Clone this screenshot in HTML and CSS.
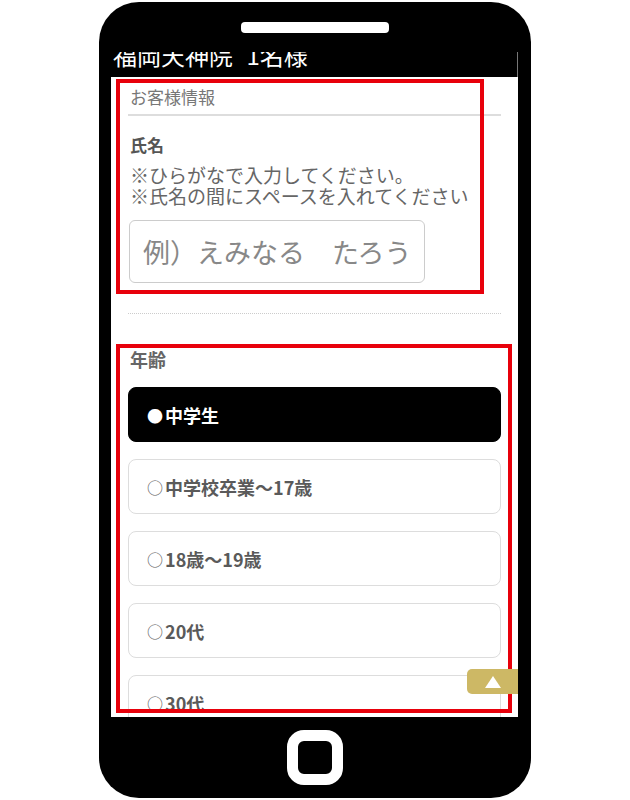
FILE: index.html
```html
<!DOCTYPE html>
<html lang="ja">
    <head>
        <meta charset="UTF-8">
        <meta name="viewport" content="width=device-width, initial-scale=1.0">
        <title>お客様情報</title>
        <link rel="stylesheet" href="styles.css">
    </head>
    <body>
        <div class="phone">
            <div class="speaker"></div>
            <div class="screen">
                <div class="site-header">
                    <div class="site-title">福岡天神院 <span class="site-count">1名様</span></div>
                </div>
                <div class="form-body">
                    <h3 class="form-heading">お客様情報</h3>
                    <div class="field">
                        <div class="field-label">氏名</div>
                        <p class="field-note">※ひらがなで入力してください。<br>※氏名の間にスペースを入れてください</p>
                        <input class="text-input" type="text" placeholder="例）えみなる　たろう">
                    </div>
                    <hr class="divider">
                    <div class="field">
                        <div class="field-label age-label">年齢</div>
                        <div class="options">
                            <div class="option selected"><span class="option-mark">●</span>中学生</div>
                            <div class="option"><span class="option-mark">○</span>中学校卒業〜17歳</div>
                            <div class="option"><span class="option-mark">○</span>18歳〜19歳</div>
                            <div class="option"><span class="option-mark">○</span>20代</div>
                            <div class="option"><span class="option-mark">○</span>30代</div>
                        </div>
                    </div>
                </div>
                <!-- annotation boxes -->
                <div class="mark mark-name"></div>
                <div class="mark mark-age"></div>
                <div class="to-top"><span class="to-top-arrow"></span></div>
            </div>
            <div class="home-button"></div>
        </div>
    </body>
</html>
```

FILE: styles.css
```css
body {
    margin: 0;
    background-color: #fff;
    font-family: "Noto Sans CJK JP", "Noto Sans", sans-serif;
}
.phone {
    width: 432px;
    height: 796px;
    margin: 2px auto 0;
    padding: 20px 0 13px;
    box-sizing: border-box;
    background-color: #000;
    border-radius: 40px;
    display: flex;
    flex-direction: column;
    align-items: center;
}
.speaker {
    width: 148px;
    height: 11px;
    background-color: #fff;
    border-radius: 4px;
    flex-shrink: 0;
}
.screen {
    position: relative;
    align-self: stretch;
    height: 665px;
    margin: 19px 13px 0 12px;
    background-color: #fff;
    overflow: hidden;
    flex-shrink: 0;
}
.home-button {
    width: 56px;
    height: 55px;
    margin-top: 13px;
    box-sizing: border-box;
    border: 11px solid #fff;
    border-radius: 17px;
    flex-shrink: 0;
}
.site-header {
    margin-top: -10px;
    padding: 0 0 10px 2px;
    background-color: #000;
    border-right: 1px solid #777;
}
.site-title {
    color: #fff;
    font-size: 24px;
    line-height: 25px;
    white-space: nowrap;
}
.site-count {
    margin-left: 8px;
}
.form-body {
    padding: 11px 17px 0;
}
.form-heading {
    margin: 0;
    padding: 0 0 9px 2px;
    border-bottom: 2px solid #ddd;
    font-size: 17px;
    line-height: 17px;
    font-weight: normal;
    color: #777;
}
.field-label {
    margin-top: 20px;
    padding-left: 2px;
    font-size: 17px;
    line-height: 17px;
    font-weight: bold;
    color: #555;
}
.field-note {
    margin: 11px 0 0;
    padding-left: 2px;
    font-size: 19px;
    line-height: 21px;
    color: #666;
    white-space: nowrap;
}
.text-input {
    display: block;
    width: 296px;
    height: 63px;
    margin: 14px 0 0 1px;
    padding: 0 13px;
    box-sizing: border-box;
    border: 1px solid #ccc;
    border-radius: 6px;
    font-family: inherit;
    font-size: 27px;
    color: #555;
    -webkit-appearance: none;
}
.text-input::placeholder {
    color: #888;
}
.divider {
    margin: 30px 0 0;
    border: 0;
    border-top: 1px dotted #ccc;
}
.age-label {
    margin-top: 36px;
    font-size: 18px;
    line-height: 18px;
    color: #666;
}
.options {
    margin-top: 19px;
    display: flex;
    flex-direction: column;
    gap: 17px;
}
.option {
    height: 55px;
    padding-left: 18px;
    box-sizing: border-box;
    display: flex;
    align-items: center;
    border: 1px solid #ddd;
    border-radius: 8px;
    font-size: 18px;
    font-weight: bold;
    color: #5a5a5a;
    flex-shrink: 0;
}
.option-mark {
    margin-right: 2px;
    font-size: 16px;
    font-weight: normal;
}
.option.selected {
    background-color: #000;
    border-color: #000;
    color: #fff;
}
.mark {
    position: absolute;
    left: 5px;
    border: 4px solid #e8000b;
    box-sizing: border-box;
}
.mark-name {
    top: 27px;
    width: 368px;
    height: 215px;
}
.mark-age {
    top: 292px;
    width: 396px;
    height: 369px;
}
.to-top {
    position: absolute;
    top: 617px;
    right: 0;
    width: 51px;
    height: 25px;
    background-color: #cdb865;
    border-radius: 5px 0 0 5px;
    display: flex;
    align-items: center;
    justify-content: center;
}
.to-top-arrow {
    width: 0;
    height: 0;
    border-left: 8px solid transparent;
    border-right: 8px solid transparent;
    border-bottom: 12px solid #fff;
}
```
